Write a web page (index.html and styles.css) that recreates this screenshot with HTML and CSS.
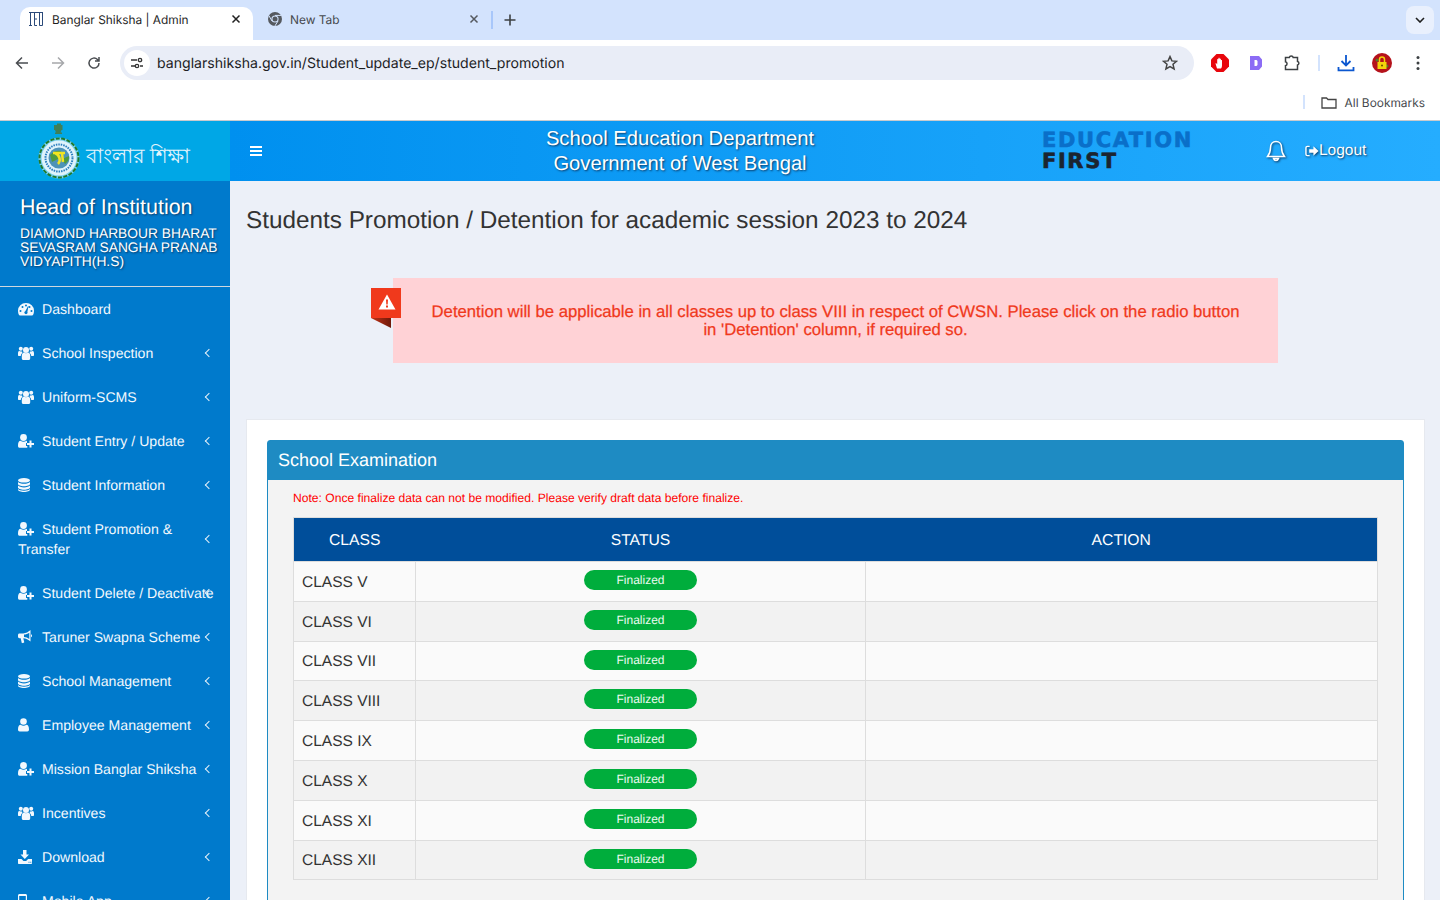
FILE: index.html
```html
<!DOCTYPE html>
<html lang="en">
<head>
  <meta charset="UTF-8" />
  <meta name="viewport" content="width=device-width, initial-scale=1.0"/>
  <title>Banglar Shiksha | Admin</title>
  <link rel="stylesheet" href="styles.css">
</head>
<body>
  <svg class="icon-defs" width="0" height="0">
    <symbol id="i-dash" viewBox="0 0 16 14"><path d="M8 1a7.800 7.800 0 0 0-8 8c0 1.500.4 2.900 1 4 .2.300.5.500.9.500h12.200c.4 0 .7-.2.900-.5.600-1.100 1-2.500 1-4a7.800 7.800 0 0 0-8-8zM2.500 10a1 1 0 1 1 0-2 1 1 0 0 1 0 2zm2-4a1 1 0 1 1 0-2 1 1 0 0 1 0 2zM8 4.500a1 1 0 1 1 0-2 1 1 0 0 1 0 2zm1.600 6.500a1.700 1.700 0 0 1-3.200 0c-.2-.8.200-1.500.9-1.800L9.800 4.500c.2-.3.700-.1.600.2l-1 5c0 .4.200.8.200 1.300zM13.500 10a1 1 0 1 1 0-2 1 1 0 0 1 0 2zm-2-4a1 1 0 1 1 0-2 1 1 0 0 1 0 2z" fill="currentColor" fill-rule="evenodd"/></symbol>
    <symbol id="i-users" viewBox="0 0 16 14"><g fill="currentColor"><circle cx="8" cy="4" r="3"/><circle cx="2.800" cy="2.800" r="2"/><circle cx="13.200" cy="2.800" r="2"/><path d="M3.800 10c0-2.300 1-3.500 2.300-3.500.5.400 1.200.7 1.900.7s1.400-.3 1.900-.7c1.300 0 2.300 1.200 2.300 3.500v2.200c0 .9-.7 1.800-1.600 1.800H5.400c-.9 0-1.600-.9-1.600-1.800z"/><path d="M0 7.500C0 5.800.5 5 1.300 5c.5.300 1 .5 1.500.5h1.300c-.1.500.1 1 .4 1.400-1 .5-1.700 1.600-1.700 3H1c-.6 0-1-.4-1-1zM16 7.500C16 5.800 15.500 5 14.700 5c-.5.300-1 .5-1.500.5h-1.300c.1.500-.1 1-.4 1.400 1 .5 1.700 1.600 1.700 3H15c.6 0 1-.4 1-1z"/></g></symbol>
    <symbol id="i-add" viewBox="0 0 16 14"><g fill="currentColor"><circle cx="5.500" cy="3.500" r="3.400"/><path d="M0 11.500c0-2.900.9-4.700 2.600-4.700.8.600 1.800 1 2.900 1s2.100-.4 2.900-1l.6.1V9H8v3h1.300v1.800h-8C.5 13.800 0 12.800 0 11.500z"/><path d="M11.500 6.500h2V9H16v2h-2.500v2.500h-2V11H9V9h2.500z"/></g></symbol>
    <symbol id="i-db" viewBox="0 0 12 14"><g fill="currentColor"><ellipse cx="6" cy="2.300" rx="6" ry="2.300"/><path d="M0 4c1 1.200 3.300 1.800 6 1.800S11 5.200 12 4v2c0 1.200-2.700 2.200-6 2.200S0 7.200 0 6zM0 7.600c1 1.200 3.300 1.800 6 1.800s5-.6 6-1.800v2c0 1.200-2.700 2.200-6 2.200S0 10.800 0 9.600zM0 11c1 1.200 3.300 1.700 6 1.700S11 12.200 12 11v.8c0 1.200-2.700 2.200-6 2.200S0 13 0 11.800z"/></g></symbol>
    <symbol id="i-horn" viewBox="0 0 14 14"><path d="M12.500 0v11.500c-2.200-2-4.500-3-7.200-3.200l.9 3.600c.1.400-.1.700-.5.800l-1.300.4c-.3.100-.6-.1-.7-.4L2.700 8.200H1.500C.6 8.200 0 7.500 0 6.600V5c0-.9.600-1.600 1.500-1.600h3.700C8 3.300 10.300 2 12.500 0zM11.300 2.700C9.700 3.800 7.900 4.500 6 4.600v2.500c1.900.2 3.700.8 5.300 1.900zM13 4.300c.6.200 1 .8 1 1.500s-.4 1.300-1 1.500z" fill="currentColor" fill-rule="evenodd"/></symbol>
    <symbol id="i-user" viewBox="0 0 11 14"><g fill="currentColor"><circle cx="5.500" cy="3.500" r="3.300"/><path d="M0 11.500c0-3 1-4.700 2.700-4.700.8.700 1.700 1 2.800 1s2-.3 2.800-1c1.700 0 2.700 1.700 2.700 4.700 0 1.200-.7 2-1.700 2H1.700C.7 13.500 0 12.700 0 11.500z"/></g></symbol>
    <symbol id="i-down" viewBox="0 0 14 14"><g fill="currentColor"><path d="M5 0h3.500v4.500h2.500L6.800 9 2.500 4.500H5z"/><path d="M0 9h3.500l2 2h2.600l2-2H14v4.300c0 .4-.3.700-.7.700H.7c-.4 0-.7-.3-.7-.7zm10.500 2.800v1h1v-1zm1.800 0v1h1v-1z" fill-rule="evenodd"/></g></symbol>
    <symbol id="i-mobile" viewBox="0 0 9 14"><path d="M1.500 0h6C8.300 0 9 .7 9 1.500v11c0 .8-.7 1.500-1.500 1.500h-6C.7 14 0 13.300 0 12.500v-11C0 .7.700 0 1.500 0zM1.200 2v9h6.600V2z" fill="currentColor" fill-rule="evenodd"/></symbol>
  </svg>

  <div class="browser">
    <div class="tabstrip">
      <div class="tab tab-active">
        <svg class="favicon" viewBox="0 0 16 16" fill="none" stroke="#2b4a7a" stroke-width="1"><path d="M1 1.500h14M2.500 1.500v13M1 14.500h3M6.500 1.500v13M6.500 8H9M6.500 14.500H9M11.500 1.500v13M14.500 1.500v13M11.500 14.500h3"/></svg>
        <span class="tab-title">Banglar Shiksha | Admin</span>
        <svg class="tab-x" viewBox="0 0 10 10"><path d="M1.500 1.500l7 7M8.500 1.500l-7 7" stroke="#222" stroke-width="1.500"/></svg>
      </div>
      <div class="tab">
        <svg class="favicon" viewBox="0 0 16 16"><circle cx="8" cy="8" r="7" fill="#55595f"/><circle cx="8" cy="8" r="3.600" fill="#d3e3fd"/><circle cx="8" cy="8" r="2.500" fill="#55595f"/><path d="M8 4.400h6.400M5 10L1.900 4.600M11 10l-3.100 5" stroke="#d3e3fd" stroke-width="1"/></svg>
        <span class="tab-title tab-title-dim">New Tab</span>
        <svg class="tab-x" viewBox="0 0 10 10"><path d="M1.500 1.500l7 7M8.500 1.500l-7 7" stroke="#55595f" stroke-width="1.500"/></svg>
      </div>
      <span class="tab-sep"></span>
      <svg class="new-tab" viewBox="0 0 12 12"><path d="M6 .5v11M.5 6h11" stroke="#3c4043" stroke-width="1.600"/></svg>
      <div class="tab-search"><svg viewBox="0 0 10 6" width="10" height="6"><path d="M1 1l4 4 4-4" fill="none" stroke="#1f1f1f" stroke-width="1.600"/></svg></div>
    </div>
    <div class="toolbar">
      <svg class="nav" viewBox="0 0 14 14"><path d="M13 7H2M7 1.500L1.500 7 7 12.500" fill="none" stroke="#4a4d51" stroke-width="1.500"/></svg>
      <svg class="nav" viewBox="0 0 14 14"><path d="M1 7h11M7 1.500L12.500 7 7 12.500" fill="none" stroke="#a6a8ab" stroke-width="1.500"/></svg>
      <svg class="nav" viewBox="0 0 14 14"><path d="M12 7a5 5 0 1 1-1.500-3.500L12 5M12 1v4H8" fill="none" stroke="#4a4d51" stroke-width="1.500"/></svg>
      <div class="omnibox">
        <span class="site-btn"><svg viewBox="0 0 14 12" width="14" height="12"><g fill="none" stroke="#333" stroke-width="1.300"><path d="M1 3h6M10 9h3M1 9h4"/><circle cx="10" cy="3" r="1.700"/><circle cx="7" cy="9" r="1.700"/></g></svg></span>
        <span class="url">banglarshiksha.gov.in/Student_update_ep/student_promotion</span>
        <svg class="star" viewBox="0 0 16 16"><path d="M8 1.600l1.900 4.300 4.600.4-3.500 3 1.100 4.600L8 11.500l-4.100 2.400L5 9.300l-3.500-3 4.600-.4z" fill="none" stroke="#444" stroke-width="1.500"/></svg>
      </div>
      <div class="extensions">
        <svg class="ext" viewBox="0 0 18 18"><path d="M5.500 0h7L18 5.500v7L12.500 18h-7L0 12.500v-7z" fill="#e8060c"/><path d="M6 14.500L4.500 9.500c.8-.4 1.300.2 1.700 1V5.500c.5-.6 1-.6 1.200 0V4.300c.4-.6 1-.6 1.300 0v.8c.4-.5 1-.5 1.200.1v1c.4-.4 1-.3 1.100.2v5c0 1.500-.6 2.600-1 3.100z" fill="#fff"/></svg>
        <svg class="ext" viewBox="0 0 18 18"><path d="M3 2h9l3 3.500v7L12 16H3zM7.500 6v6h2l1-1V7l-1-1z" fill="#8c6cf5" fill-rule="evenodd"/></svg>
        <svg class="ext" viewBox="0 0 18 18"><path d="M2 4h3.800a2 2 0 0 1 3.900 0H14v4a1.800 1.800 0 0 1 0 3.500V16H2v-3.800a2 2 0 0 0 0-3.900z" transform="translate(.5 -.5)" fill="none" stroke="#3c4043" stroke-width="1.500"/></svg>
        <span class="ext-sep"></span>
        <svg class="ext" viewBox="0 0 18 18"><path d="M9 1v10M4.500 7L9 11.500 13.500 7M1.500 13v3.300h15V13" fill="none" stroke="#0b57d0" stroke-width="1.800"/></svg>
        <svg class="ext ext-avatar" viewBox="0 0 20 20"><circle cx="10" cy="10" r="10" fill="#b5121b"/><circle cx="5" cy="7" r="1.500" fill="#557a2a"/><circle cx="15" cy="13" r="1.500" fill="#557a2a"/><rect x="5.500" y="9" width="9" height="7" fill="#f4d30b"/><path d="M7.500 9V6.500a2.500 2.500 0 0 1 5 0V9" fill="none" stroke="#f4d30b" stroke-width="1.500"/><circle cx="10" cy="12.500" r="1" fill="#6b4a00"/></svg>
        <svg class="ext-menu" viewBox="0 0 4 16"><g fill="#3c4043"><circle cx="2" cy="2.500" r="1.500"/><circle cx="2" cy="8" r="1.500"/><circle cx="2" cy="13.500" r="1.500"/></g></svg>
      </div>
    </div>
    <div class="bookmarks">
      <span class="bm-sep"></span>
      <svg class="bm-folder" viewBox="0 0 16 13"><path d="M1 2h4.500l1.500 1.500h8V12H1z" fill="none" stroke="#444" stroke-width="1.300"/></svg>
      <span class="bm-label">All Bookmarks</span>
    </div>
  </div>

  <div class="page">
    <aside class="sidebar">
      <div class="logo">
        <svg class="emblem" viewBox="0 0 42 56">
          <path d="M19 .5h4v1.500h1.500v5h-1l-1 2.500h1.500v1.500h-7V9.500H18L17 7h-1V2h3z" fill="#3f7f58"/>
          <circle cx="21" cy="35" r="20.500" fill="#e9f7f2" opacity=".5"/>
          <circle cx="21" cy="35" r="19.500" fill="none" stroke="#1f7a2c" stroke-width="2" stroke-dasharray="4 1.500"/>
          <circle cx="21" cy="35" r="17.500" fill="#dff3fb"/>
          <circle cx="21" cy="35" r="13.500" fill="none" stroke="#2d7fc0" stroke-width="2" stroke-dasharray="1.500 1"/>
          <circle cx="21" cy="35" r="10.500" fill="#4d93b8"/>
          <path d="M12 32c3-4 8-5 11-4l-3 8-6 3zM24 36l7-3c.4 3-1 6-4 8z" fill="#4f9a3e"/>
          <path d="M15 30h12M17 30c5 2 6 8 3 11M24 30l1 9" fill="none" stroke="#f2e420" stroke-width="2.500"/>
        </svg>
        <span class="logo-text" lang="bn">বাংলার শিক্ষা</span>
      </div>
      <div class="profile">
        <h2>Head of Institution</h2>
        <p>DIAMOND HARBOUR BHARAT SEVASRAM SANGHA PRANAB VIDYAPITH(H.S)</p>
      </div>
      <ul class="menu">
        <li><svg class="mi mi-16"><use href="#i-dash"/></svg>Dashboard</li>
        <li class="sub"><svg class="mi mi-16"><use href="#i-users"/></svg>School Inspection</li>
        <li class="sub"><svg class="mi mi-16"><use href="#i-users"/></svg>Uniform-SCMS</li>
        <li class="sub"><svg class="mi mi-16"><use href="#i-add"/></svg>Student Entry / Update</li>
        <li class="sub"><svg class="mi mi-12"><use href="#i-db"/></svg>Student Information</li>
        <li class="sub"><svg class="mi mi-16"><use href="#i-add"/></svg>Student Promotion &amp;<br>Transfer</li>
        <li class="sub"><svg class="mi mi-16"><use href="#i-add"/></svg>Student Delete / Deactivate</li>
        <li class="sub"><svg class="mi mi-14"><use href="#i-horn"/></svg>Taruner Swapna Scheme</li>
        <li class="sub"><svg class="mi mi-12"><use href="#i-db"/></svg>School Management</li>
        <li class="sub"><svg class="mi mi-11"><use href="#i-user"/></svg>Employee Management</li>
        <li class="sub"><svg class="mi mi-16"><use href="#i-add"/></svg>Mission Banglar Shiksha</li>
        <li class="sub"><svg class="mi mi-16"><use href="#i-users"/></svg>Incentives</li>
        <li class="sub"><svg class="mi mi-14"><use href="#i-down"/></svg>Download</li>
        <li class="sub"><svg class="mi mi-9"><use href="#i-mobile"/></svg>Mobile App</li>
      </ul>
    </aside>

    <div class="content">
      <header class="topbar">
        <div class="burger"><span></span><span></span><span></span></div>
        <div class="dept">School Education Department<br>Government of West Bengal</div>
        <div class="edu"><b>EDUCATION</b><b class="edu-first">FIRST</b></div>
        <svg class="bell" viewBox="0 0 20 22"><path d="M10 1.500c-3.500 0-5.500 2.700-5.500 6 0 4-1 6.500-3 9h17c-2-2.500-3-5-3-9 0-3.300-2-6-5.500-6zM7.500 18.500c.5 1.500 1.300 2 2.500 2s2-.5 2.500-2z" fill="none" stroke="#fff" stroke-width="1.500"/></svg>
        <div class="logout"><svg class="logout-ic" viewBox="0 0 15 12"><path d="M5 1H2.500C1.500 1 1 1.600 1 2.500v7c0 .9.500 1.500 1.500 1.500H5" fill="none" stroke="#fff" stroke-width="1.500"/><path d="M4.500 4H9V1l5.500 5L9 11V8H4.500z" fill="#fff"/></svg>Logout</div>
      </header>

      <main class="main">
        <h1>Students Promotion / Detention for academic session 2023 to 2024</h1>

        <div class="alert-wrap">
          <div class="alert-flag">
            <svg viewBox="0 0 18 16" width="18" height="16"><path d="M9 .5l8.500 15H.5z" fill="#fff"/><path d="M8 5.500h2l-.3 5h-1.400zM8 11.500h2v2H8z" fill="#f0391c"/></svg>
          </div>
          <div class="alert">Detention will be applicable in all classes up to class VIII in respect of CWSN. Please click on the radio button in 'Detention' column, if required so.</div>
        </div>

        <section class="card">
          <div class="panel">
            <div class="panel-head">School Examination</div>
            <div class="panel-body">
              <p class="note">Note: Once finalize data can not be modified. Please verify draft data before finalize.</p>
              <table class="grid">
                <thead>
                  <tr><th class="col-class">CLASS</th><th class="col-status">STATUS</th><th>ACTION</th></tr>
                </thead>
                <tbody>
                  <tr><td>CLASS V</td><td class="mid"><span class="pill">Finalized</span></td><td></td></tr>
                  <tr><td>CLASS VI</td><td class="mid"><span class="pill">Finalized</span></td><td></td></tr>
                  <tr><td>CLASS VII</td><td class="mid"><span class="pill">Finalized</span></td><td></td></tr>
                  <tr><td>CLASS VIII</td><td class="mid"><span class="pill">Finalized</span></td><td></td></tr>
                  <tr><td>CLASS IX</td><td class="mid"><span class="pill">Finalized</span></td><td></td></tr>
                  <tr><td>CLASS X</td><td class="mid"><span class="pill">Finalized</span></td><td></td></tr>
                  <tr><td>CLASS XI</td><td class="mid"><span class="pill">Finalized</span></td><td></td></tr>
                  <tr><td>CLASS XII</td><td class="mid"><span class="pill">Finalized</span></td><td></td></tr>
                </tbody>
              </table>
            </div>
          </div>
        </section>
      </main>
    </div>
  </div>
</body>
</html>
```

FILE: styles.css
```css
* {
  box-sizing: border-box;
}

html, body {
  margin: 0;
  padding: 0;
  height: 100%;
  overflow: hidden;
}

body {
  display: flex;
  flex-direction: column;
  font-family: "Liberation Sans", Arial, sans-serif;
  text-rendering: geometricPrecision;
  background: #ecf0f8;
}

.icon-defs {
  position: absolute;
}

/* browser chrome */
.browser {
  flex: none;
  height: 121px;
  background: #fff;
  border-bottom: 1px solid #c9cbce;
  font-family: Inter, "Liberation Sans", sans-serif;
}

.tabstrip {
  height: 40px;
  background: #d3e3fd;
  display: flex;
  align-items: flex-end;
  padding-left: 20px;
  position: relative;
}

.tab {
  height: 33px;
  display: flex;
  align-items: center;
  padding: 0 5px 9px 8px;
  font-size: 11.900px;
  color: #1f1f1f;
  border-radius: 10px 10px 0 0;
}

.tab + .tab {
  width: 238px;
  padding-left: 14px;
  padding-right: 5px;
}

.tab-active {
  width: 233px;
  background: #fff;
}

.favicon {
  width: 16px;
  height: 16px;
  flex: none;
}

.tab-title {
  flex: 1;
  margin-left: 8px;
}

.tab-title-dim {
  margin-left: 7px;
  color: #45484c;
}

.tab-x {
  width: 10px;
  height: 10px;
  flex: none;
  margin-right: 7px;
}

.tab-sep {
  width: 2px;
  height: 18px;
  background: #a8c7fa;
  margin: 0 0 11px 0;
}

.new-tab {
  width: 12px;
  height: 12px;
  margin: 0 0 14px 11px;
}

.tab-search {
  position: absolute;
  right: 6px;
  top: 6px;
  width: 28px;
  height: 28px;
  border-radius: 8px;
  background: #e9f0fd;
  display: flex;
  align-items: center;
  justify-content: center;
}

.toolbar {
  height: 46px;
  display: flex;
  align-items: center;
  padding-left: 15px;
  gap: 22px;
}

.nav {
  width: 14px;
  height: 14px;
  flex: none;
}

.omnibox {
  width: 1074px;
  height: 34px;
  margin-left: -3px;
  border-radius: 17px;
  background: #e9edf7;
  display: flex;
  align-items: center;
  padding: 0 16px 0 4px;
}

.site-btn {
  width: 26px;
  height: 26px;
  border-radius: 50%;
  background: #fff;
  display: flex;
  align-items: center;
  justify-content: center;
}

.url {
  flex: 1;
  margin: 0 0 0 7px;
  font-size: 14.100px;
  color: #202124;
}

.star {
  width: 16px;
  height: 16px;
}

.extensions {
  display: flex;
  align-items: center;
  margin-left: -5px;
}

.ext {
  width: 18px;
  height: 18px;
  margin-right: 18px;
}

.ext-sep {
  width: 2px;
  height: 16px;
  background: #d3e3fd;
  margin-right: 17px;
  margin-left: -1px;
}

.ext-avatar {
  width: 20px;
  height: 20px;
  margin: 0 17px 0 -1px;
}

.ext-menu {
  width: 4px;
  height: 16px;
  margin-left: 7px;
}

.bookmarks {
  height: 34px;
  display: flex;
  align-items: center;
  justify-content: flex-end;
  padding: 0 15px 2px 0;
  font-size: 11.900px;
  color: #45484c;
}

.bm-sep {
  width: 2px;
  height: 14px;
  background: #d3e3fd;
  margin-right: 16px;
}

.bm-folder {
  width: 16px;
  height: 13px;
  margin-right: 8px;
}

/* site */
.page {
  flex: 1;
  min-height: 0;
  display: flex;
}

.sidebar {
  width: 230px;
  flex: none;
  background: #007acc;
  color: #fff;
  overflow: hidden;
}

.logo {
  height: 60px;
  background: #00a7e6;
  display: flex;
  align-items: center;
  padding-left: 38px;
}

.emblem {
  width: 42px;
  height: 56px;
  flex: none;
}

.logo-text {
  margin: 14px 0 0 6px;
  font-family: "Noto Sans", "DejaVu Sans", sans-serif;
  font-size: 20.400px;
  color: #e3f4fc;
  white-space: nowrap;
}

.profile {
  height: 106px;
  padding: 14px 0 0 20px;
  border-bottom: 1px solid #cfd8df;
  text-shadow: 1px 1px 2px #0b3a66;
}

.profile h2 {
  margin: 0;
  font-size: 21.400px;
  line-height: 24px;
  font-weight: 400;
}

.profile p {
  margin: 8px 0 0;
  font-size: 13.800px;
  line-height: 14px;
}

.menu {
  list-style: none;
  margin: 0;
  padding: 0;
}

.menu li {
  position: relative;
  padding: 12px 0 12px 18px;
  font-size: 14.100px;
  line-height: 20px;
  color: #f2f8fd;
  white-space: nowrap;
}

.menu li.sub::after {
  content: "";
  position: absolute;
  right: 18px;
  top: 50%;
  width: 5px;
  height: 5px;
  margin-top: -3px;
  border-left: 1px solid #e6f1fa;
  border-bottom: 1px solid #e6f1fa;
  transform: rotate(45deg);
}

.mi {
  height: 14px;
  vertical-align: -2px;
  margin-right: 8px;
}

.mi-16 {
  width: 16px;
}

.mi-14 {
  width: 14px;
  margin-right: 10px;
}

.mi-12 {
  width: 12px;
  margin-right: 12px;
}

.mi-11 {
  width: 11px;
  margin-right: 13px;
}

.mi-9 {
  width: 9px;
  margin-right: 15px;
}

.content {
  flex: 1;
  min-width: 0;
  display: flex;
  flex-direction: column;
}

.topbar {
  height: 60px;
  flex: none;
  background: linear-gradient(to right, #0090ef, #25adff);
  display: flex;
  align-items: center;
  color: #fff;
}

.burger {
  margin-left: 20px;
  width: 12px;
}

.burger span {
  display: block;
  height: 2px;
  background: #fff;
  margin: 2px 0;
}

.dept {
  width: 440px;
  margin-left: 198px;
  padding-top: 1px;
  text-align: center;
  font-size: 20.200px;
  line-height: 25px;
  text-shadow: 1px 1px 2px #0b3a66;
}

.edu {
  margin-left: 142px;
  width: 224px;
  display: flex;
  flex-direction: column;
  font-family: "DejaVu Sans", sans-serif;
  font-size: 21px;
  line-height: 21px;
  color: #0a6fc9;
  letter-spacing: 1.600px;
  -webkit-text-stroke: 0.6px currentColor;
}

.edu-first {
  color: #1b2430;
}

.bell {
  width: 20px;
  height: 22px;
  filter: drop-shadow(1px 1px 1px #0b3a66);
}

.logout {
  margin: -1px 0 0 19px;
  font-size: 15.500px;
  text-shadow: 1px 1px 2px #0b3a66;
  display: flex;
  align-items: center;
}

.logout-ic {
  width: 14px;
  height: 12px;
  filter: drop-shadow(1px 1px 1px #0b3a66);
}

.main {
  flex: 1;
  min-height: 0;
  padding: 0 16px;
}

h1 {
  margin: 0;
  padding-top: 26px;
  font-size: 24.300px;
  line-height: 28px;
  font-weight: 400;
  color: #333;
}

.alert-wrap {
  position: relative;
  margin: 43px 146px 0 147px;
}

.alert {
  height: 85px;
  background: #ffd2d6;
  color: #f0391c;
  font-size: 16.700px;
  line-height: 18px;
  padding: 25px 35px 0;
  text-align: center;
  -webkit-text-stroke: 0.25px #f0391c;
}

.alert-flag {
  position: absolute;
  left: -22px;
  top: 10px;
  width: 30px;
  height: 30px;
  padding: 0 0 2px 1px;
  background: #f0391c;
  display: flex;
  align-items: center;
  justify-content: center;
}

.alert-flag::after {
  content: "";
  position: absolute;
  left: 0;
  top: 30px;
  width: 20px;
  height: 10px;
  background: linear-gradient(to right, #c23218, #6f1a0a);
  clip-path: polygon(0 0, 100% 0, 100% 100%);
}

.card {
  margin: 56px 0 0;
  background: #fff;
  border: 1px solid #e6e9ef;
  padding: 20px 20px 0;
  width: 1179px;
}

.panel {
  border: 1px solid #1e8bc3;
  border-radius: 3px 3px 0 0;
  background: #f3f3f3;
}

.panel-head {
  height: 39px;
  padding: 0 10px;
  background: #1e8bc3;
  color: #fff;
  font-size: 18px;
  line-height: 39px;
}

.panel-body {
  padding: 10px 25px 30px;
}

.note {
  margin: 0 0 11px;
  font-size: 12.100px;
  line-height: 16px;
  color: #f00;
}

.grid {
  width: 100%;
  border-collapse: collapse;
  table-layout: fixed;
  border: 1px solid #ddd;
}

.grid th {
  height: 44px;
  background: #004e9a;
  color: #fff;
  font-size: 15.700px;
  font-weight: 400;
  padding: 2px 0 0;
}

.col-class {
  width: 122px;
}

.col-status {
  width: 450px;
}

.grid td {
  height: 39.800px;
  padding: 3px 8px 0;
  border: 1px solid #ddd;
  font-size: 15.500px;
  color: #333;
  background: #fafafa;
}

.grid tbody tr:nth-child(even) td {
  background: #f2f2f2;
}

.grid td.mid {
  text-align: center;
  vertical-align: top;
  padding-top: 8px;
}

.pill {
  display: block;
  width: 113px;
  height: 20px;
  margin: 0 auto;
  border-radius: 10px;
  background: #00ad3c;
  color: #eafaf0;
  font-size: 12px;
  line-height: 20px;
}
```
